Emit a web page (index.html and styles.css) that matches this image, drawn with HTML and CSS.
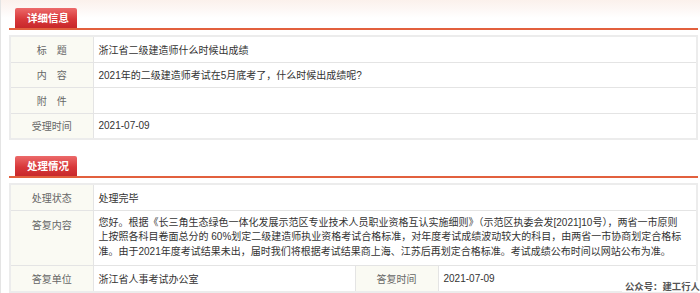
FILE: index.html
```html
<!DOCTYPE html>
<html lang="zh">
<head>
<meta charset="utf-8">
<link rel="stylesheet" href="styles.css">
</head>
<body>
<div class="page">
  <section class="sec sec-first">
    <div class="sec-head"><span class="tab">详细信息</span></div>
    <table class="info">
      <colgroup><col class="c-label"><col></colgroup>
      <tr><th>标　题</th><td>浙江省二级建造师什么时候出成绩</td></tr>
      <tr><th>内　容</th><td>2021年的二级建造师考试在5月底考了，什么时候出成绩呢?</td></tr>
      <tr><th>附　件</th><td></td></tr>
      <tr><th>受理时间</th><td>2021-07-09</td></tr>
    </table>
  </section>
  <section class="sec sec-second">
    <div class="sec-head"><span class="tab">处理情况</span></div>
    <table class="info">
      <colgroup><col class="c-label"><col class="c-val"><col class="c-label2"><col></colgroup>
      <tr><th>处理状态</th><td colspan="3">处理完毕</td></tr>
      <tr class="tall"><th>答复内容</th><td colspan="3" class="para">您好。根据《长三角生态绿色一体化发展示范区专业技术人员职业资格互认实施细则》（示范区执委会发[2021]10号），两省一市原则上按照各科目卷面总分的 60%划定二级建造师执业资格考试合格标准，对年度考试成绩波动较大的科目，由两省一市协商划定合格标准。由于2021年度考试结果未出，届时我们将根据考试结果商上海、江苏后再划定合格标准。考试成绩公布时间以网站公布为准。</td></tr>
      <tr><th>答复单位</th><td>浙江省人事考试办公室</td><th>答复时间</th><td>2021-07-09</td></tr>
    </table>
  </section>
  <div class="mark">公众号：建工行人</div>
</div>
</body>
</html>
```
FILE: styles.css
```css
html, body {
  margin: 0;
  padding: 0;
  background: #fff;
}
body {
  font-family: "Liberation Sans", "Noto Sans CJK SC", sans-serif;
  font-size: 10px;
  color: #333;
}
.page {
  position: relative;
  width: 700px;
  height: 293px;
  overflow: hidden;
  box-sizing: border-box;
  border-left: 1px solid #e4e4e4;
  padding: 8px 2px 0 8px;
  background: linear-gradient(#fbf1ec 0px, #fdf8f6 10px, #ffffff 18px);
}
.sec-head {
  height: 20px;
  border-bottom: 2px solid #e2603e;
  padding-left: 6px;
  display: flex;
  align-items: flex-end;
}
.tab {
  display: inline-block;
  width: 62px;
  height: 20px;
  line-height: 20px;
  box-sizing: border-box;
  padding-left: 12px;
  color: #fff;
  font-weight: bold;
  font-size: 10.5px;
  background: linear-gradient(#ec6a6a, #d8383a 55%, #c8282b);
  border-radius: 2px 2px 0 0;
}
.info {
  width: 689px;
  margin-top: 5px;
  border-collapse: collapse;
  table-layout: fixed;
  border: 2px solid #ececec;
}
.info th, .info td {
  border: 1px solid #e4e4e4;
  height: 24.5px;
  padding: 0;
  font-weight: normal;
  vertical-align: middle;
}
.info th {
  background: #fafaf3;
  color: #666;
  text-align: center;
}
.info td {
  padding-left: 5px;
  color: #333;
}
.c-label { width: 83px; }
.c-val { width: 262px; }
.c-label2 { width: 83px; }
.sec-second { margin-top: 16px; }
.sec-second .info { margin-top: 5px; }
.tall th { vertical-align: top; padding-top: 6px; }
.para {
  line-height: 14.6px;
  padding: 5px 14px 6px 5px !important;
}
.mark {
  position: absolute;
  right: 0;
  bottom: 1px;
  font-size: 9.4px;
  font-weight: bold;
  color: #555;
  background: rgba(255,255,255,0.85);
  padding-left: 3px;
  font-family: "Noto Sans CJK SC", sans-serif;
  line-height: 11px;
}
```
